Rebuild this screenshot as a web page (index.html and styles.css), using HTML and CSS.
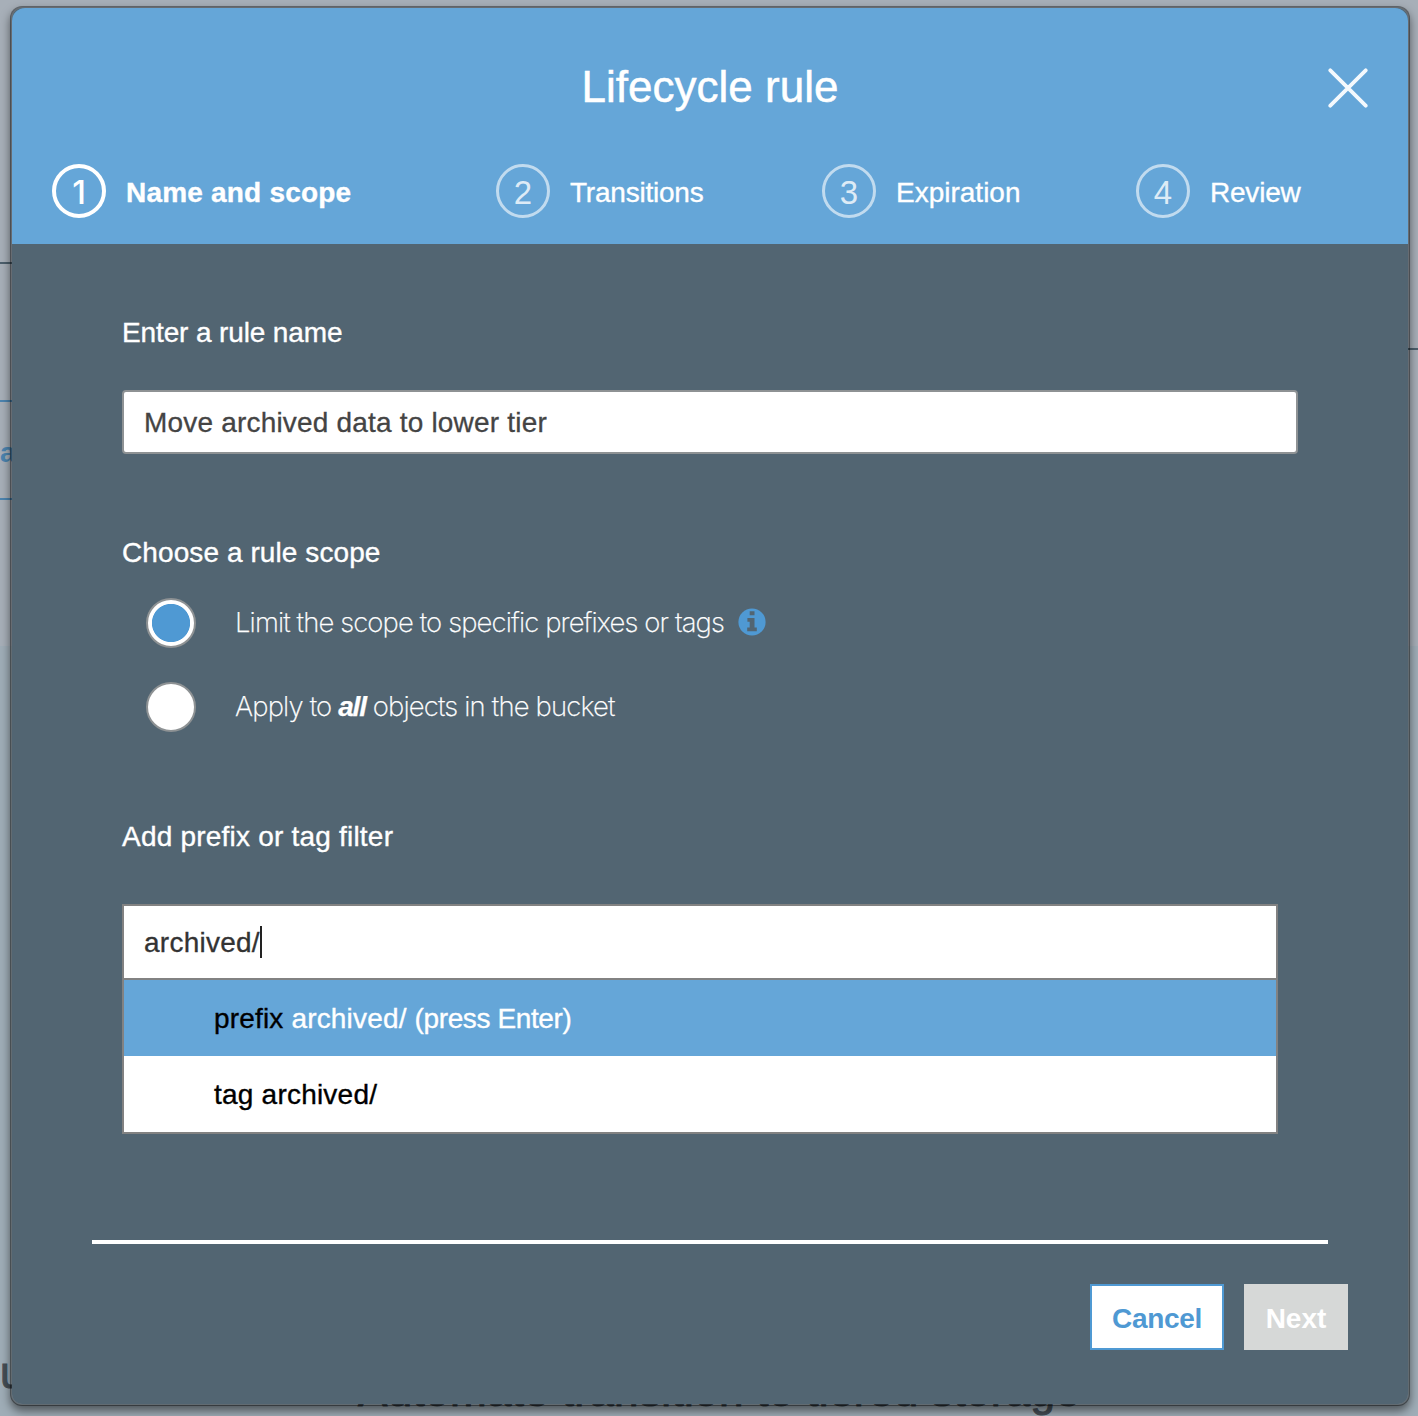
FILE: index.html
```html
<!DOCTYPE html>
<html lang="en">
<head>
<meta charset="utf-8">
<title>Lifecycle rule</title>
<link rel="stylesheet" href="styles.css">
</head>
<body>
<div class="page">
  <div class="page-upper">
    <div class="rule-left"></div>
    <div class="rule-right"></div>
    <div class="tab">a</div>
  </div>
  <div class="page-lower">
    <span class="cut">u</span>
    <span class="promo">Automate transition to tiered storage</span>
  </div>
</div>

<main class="modal">
  <header class="modal-header">
    <div class="title-row">
      <h1>Lifecycle rule</h1>
      <button class="close" aria-label="Close">
        <svg width="40" height="40" viewBox="0 0 40 40" fill="none" stroke="#fff" stroke-opacity=".93" stroke-width="3.8" stroke-linecap="round"><path d="M2.3 2.3 37.7 37.7M37.7 2.3 2.3 37.7"/></svg>
      </button>
    </div>
    <ol class="steps">
      <li class="step active"><span class="num">1</span><span class="step-label">Name and scope</span></li>
      <li class="step"><span class="num">2</span><span class="step-label tight">Transitions</span></li>
      <li class="step"><span class="num">3</span><span class="step-label">Expiration</span></li>
      <li class="step"><span class="num">4</span><span class="step-label tight">Review</span></li>
    </ol>
  </header>

  <section class="modal-body">
    <div class="label label-name">Enter a rule name</div>
    <div class="name-input">Move archived data to lower tier</div>

    <div class="label label-scope">Choose a rule scope</div>
    <div class="option">
      <span class="radio checked"></span>
      <span class="light limit">Limit the scope to specific prefixes or tags</span>
      <svg class="info" width="28" height="28" viewBox="0 0 28 28"><circle cx="14" cy="14" r="13.6" fill="#4f99d3"/><path d="M11.7 3.3h4.8v4h-4.8zM9.4 10h7.1v9.5h2.3v3.7H9.2v-3.7h2.5v-5.7H9.4z" fill="#526572"/></svg>
    </div>
    <div class="option">
      <span class="radio"></span>
      <span class="light apply">Apply to <b>all</b> objects in the bucket</span>
    </div>

    <div class="label label-filter">Add prefix or tag filter</div>
    <div class="combo">
      <div class="combo-input"><span>archived/</span><i class="caret"></i></div>
      <div class="suggestion selected"><span class="kind">prefix</span> archived/ <span class="hint">(press Enter)</span></div>
      <div class="suggestion">tag archived/</div>
    </div>
  </section>

  <footer class="modal-footer">
    <button class="btn cancel">Cancel</button>
    <button class="btn next" disabled>Next</button>
  </footer>
</main>
</body>
</html>
```
FILE: styles.css
```css
* { box-sizing: border-box; }

body {
  margin: 0;
  width: 1418px;
  height: 1416px;
  position: relative;
  overflow: hidden;
  font: 28px/42px "Liberation Sans", Arial, sans-serif;
  color: #fff;
}

.page { height: 1416px; overflow: hidden; }
.page-upper { height: 646px; padding-top: 262px; background: #a7afb8; }
.rule-left { width: 40px; height: 2px; background: #4c5f6c; }
.rule-right { width: 40px; height: 2px; margin: 84px 0 50px auto; background: #4c5f6c; }
.tab {
  width: 40px;
  height: 100px;
  padding-top: 30px;
  border: solid #4c84af;
  border-width: 2px 0;
  font-weight: bold;
  color: #4c84af;
}
.page-lower {
  display: flex;
  height: 770px;
  padding-top: 712px;
  background: #9fadb7;
  font-size: 44px;
  line-height: 44px;
  color: #454e56;
  white-space: nowrap;
  -webkit-text-stroke: 1px #454e56;
}
.cut { width: 358px; margin-top: -7px; }
.promo { margin-top: 11px; letter-spacing: .35px; }

.modal {
  position: absolute;
  left: 10px;
  top: 6px;
  width: 1400px;
  height: 1400px;
  border: 2px solid rgba(0, 0, 0, .38);
  border-radius: 12px;
  background: #526572;
  background-clip: padding-box;
  box-shadow: 0 5px 10px rgba(0, 0, 0, .5);
}

.modal-header {
  height: 236px;
  padding: 51px 40px 0;
  border-radius: 13px 13px 0 0;
  background: #65a6d8;
}
.title-row {
  display: grid;
  grid-template-columns: 40px 1fr 40px;
  align-items: center;
  height: 56px;
}
h1 {
  grid-column: 2;
  margin: 0;
  font-size: 44px;
  line-height: 52px;
  font-weight: normal;
  text-align: center;
  -webkit-text-stroke: .5px #fff;
}
.close { width: 40px; height: 40px; margin-top: 2px; padding: 0; border: 0; background: none; }
.close svg { display: block; }

.steps {
  display: grid;
  grid-template-columns: 444px 326px 314px 1fr;
  margin: 49px 0 0;
  padding: 0;
  list-style: none;
}
.step { display: flex; align-items: center; gap: 20px; }
.num {
  width: 54px;
  height: 54px;
  border: 3px solid rgba(255, 255, 255, .6);
  border-radius: 50%;
  font-size: 33px;
  line-height: 51px;
  text-align: center;
  color: rgba(255, 255, 255, .8);
}
.step-label { padding-top: 4px; -webkit-text-stroke: .35px #fff; }
.step-label.tight { letter-spacing: -.22px; }
.active .step-label { font-weight: bold; letter-spacing: .2px; }
.active .num {
  border: 4px solid #fff;
  font-family: Inter, "Liberation Sans", sans-serif;
  font-weight: 500;
  line-height: 48px;
  color: #fff;
}

.modal-body { padding: 68px 110px 0; }
.label { height: 40px; -webkit-text-stroke: .35px #fff; }
.label-name { letter-spacing: -.13px; }
.name-input {
  width: 1176px;
  height: 64px;
  margin-top: 38px;
  padding: 10px 20px;
  border: 2px solid #8e9294;
  border-radius: 4px;
  background: #fff;
  color: #444;
  letter-spacing: .19px;
  -webkit-text-stroke: .3px #444;
}
.label-scope { margin-top: 78px; letter-spacing: .09px; }
.option { display: flex; align-items: center; height: 50px; margin: 26px 0 34px 24px; }
.option + .option { margin: 34px 0 0 24px; }
.radio {
  width: 50px;
  height: 50px;
  margin-right: 39px;
  border: 2px solid #8e9294;
  border-radius: 50%;
  background: #fff;
}
.radio.checked { background: radial-gradient(circle, #4f99d3 18.7px, #fff 19.5px); }
.light {
  margin-bottom: 2px;
  font-family: Inter, "Liberation Sans", sans-serif;
  font-size: 27.5px;
  font-weight: 200;
  letter-spacing: -.88px;
  -webkit-text-stroke: .25px #fff;
}
.apply { letter-spacing: -.83px; }
.light b { font: italic bold 28px/40px "Liberation Sans", sans-serif; letter-spacing: -1.2px; }
.info { margin: 0 0 2px 14px; }

.label-filter { margin-top: 84px; letter-spacing: .21px; }
.combo {
  width: 1156px;
  height: 230px;
  margin-top: 48px;
  border: 2px solid #828282;
  background: #fff;
  color: #000;
}
.combo-input {
  display: flex;
  height: 74px;
  padding: 16px 20px;
  border-bottom: 2px solid #828282;
  color: #333;
  letter-spacing: .25px;
  -webkit-text-stroke: .3px #333;
}
.caret { width: 2px; height: 32px; margin-top: 4px; background: #222; }
.suggestion {
  height: 76px;
  padding: 18px 90px;
  letter-spacing: .22px;
  -webkit-text-stroke: .35px currentColor;
}
.selected { background: #65a6d8; color: #fff; letter-spacing: .17px; }
.kind { color: #000; -webkit-text-stroke-color: #000; }
.hint { letter-spacing: -.38px; }

.modal-footer {
  display: flex;
  justify-content: flex-end;
  gap: 20px;
  margin: 106px 80px 0;
  padding-top: 40px;
  border-top: 4px solid #fff;
}
.btn {
  height: 66px;
  padding: 4px 0 0;
  border: 0;
  font: bold 28px/40px "Liberation Sans", Arial, sans-serif;
}
.cancel { width: 134px; border: 2px solid #4f99d3; background: #fff; color: #4f99d3; letter-spacing: -.3px; }
.next { width: 104px; margin-right: -20px; background: #d6d8d7; color: #fff; }
```
